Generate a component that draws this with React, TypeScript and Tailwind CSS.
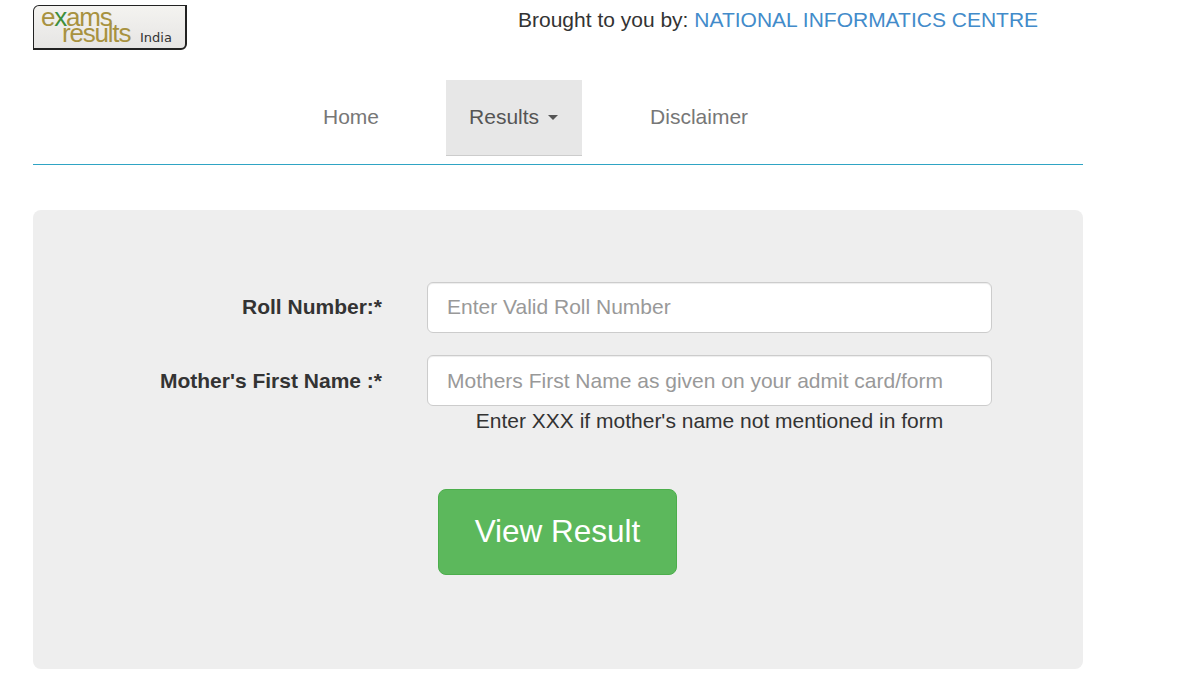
export default function App() {
  return (
    <div className="h-[694px] w-[1192px] overflow-hidden bg-white pl-[33px] text-[#333] font-['Liberation_Sans',Arial,sans-serif]">
      <div className="w-[1050px]">
        <header className="flex h-[80px] items-start">
          <div className="relative mt-[5px] h-[45px] w-[154px] rounded-tl-[6px] rounded-br-[6px] border border-[#222] border-b-2 border-r-2 bg-gradient-to-b from-[#f4f3f0] to-[#e6e5e4]">
            <span className="absolute left-[7px] top-[3px] text-[26px] leading-[16px] tracking-[-1.2px] text-[#a8923f]">e<span className="text-[#3f8f3a]">x</span>ams</span>
            <span className="absolute left-[28px] top-[19px] text-[26px] leading-[16px] tracking-[-1.2px] text-[#a8923f]">results</span>
            <span className="absolute left-[106px] top-[25px] text-[13px] leading-[14px] text-[#333] font-['DejaVu_Sans',sans-serif]">India</span>
          </div>
          <p className="ml-[331px] mt-[8px] text-[21px] leading-[24px]">
            Brought to you by: <a className="text-[#428bca]">NATIONAL INFORMATICS CENTRE</a>
          </p>
        </header>

        <nav className="h-[85px] border-b border-[#2fa4c4] pl-[267px]">
          <ul className="flex h-[76px] text-[21px] leading-[24px] text-[#777]">
            <li className="mr-[44px] flex items-center px-[23px] pb-[2px]">Home</li>
            <li className="flex items-center gap-[9px] border-b border-[#ccc] bg-[#e7e7e7] pl-[23px] pr-[24px] pb-[2px] text-[#555]">
              Results
              <span className="mt-[2px] h-0 w-0 border-x-[5.5px] border-t-[5.5px] border-x-transparent border-t-[#555]" />
            </li>
            <li className="ml-[45px] flex items-center px-[23px] pb-[2px]">Disclaimer</li>
          </ul>
        </nav>

        <main className="mt-[45px] h-[459px] rounded-[8px] bg-[#eeeeee] pt-[72px]">
          <form>
            <div className="flex h-[51px] items-center">
              <label className="w-[349px] pb-[2px] text-right text-[21px] font-bold">Roll Number:*</label>
              <input
                placeholder="Enter Valid Roll Number"
                className="ml-[45px] h-[51px] w-[565px] rounded-[6px] border border-[#ccc] bg-white px-[19px] pb-[2px] text-[21px] shadow-[inset_0_1px_1px_rgba(0,0,0,0.075)] outline-none placeholder:text-[#999]"
              />
            </div>
            <div className="mt-[22px] flex h-[51px] items-center">
              <label className="w-[349px] text-right text-[21px] font-bold">Mother's First Name :*</label>
              <input
                placeholder="Mothers First Name as given on your admit card/form"
                className="ml-[45px] h-[51px] w-[565px] rounded-[6px] border border-[#ccc] bg-white px-[19px] text-[21px] shadow-[inset_0_1px_1px_rgba(0,0,0,0.075)] outline-none placeholder:text-[#999]"
              />
            </div>
            <p className="ml-[394px] mt-[4px] w-[565px] text-center text-[21px] leading-[22px]">
              Enter XXX if mother's name not mentioned in form
            </p>
            <button
              type="button"
              className="ml-[405px] mt-[57px] h-[86px] w-[239px] rounded-[8px] border border-[#4cae4c] bg-[#5cb85c] text-[31.5px] leading-none text-white"
            >
              View Result
            </button>
          </form>
        </main>
      </div>
    </div>
  );
}
